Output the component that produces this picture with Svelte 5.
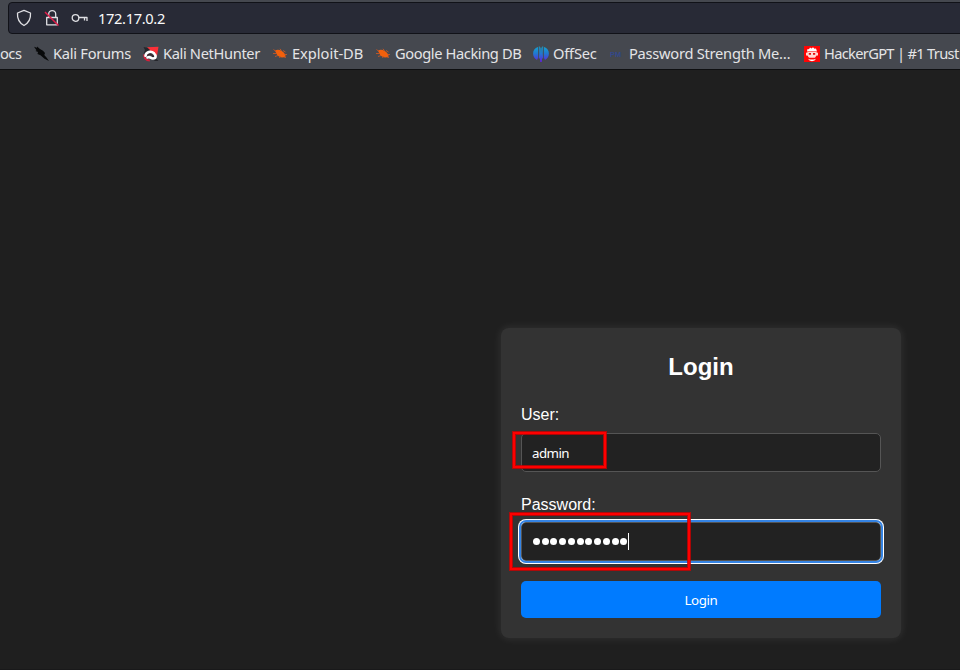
<script>
  const bookmarks = [
    { icon: 'forums', label: 'Kali Forums', width: 110, spacing: -0.27 },
    { icon: 'nethunter', label: 'Kali NetHunter', width: 129, spacing: -0.36 },
    { icon: 'bug', label: 'Exploit-DB', width: 103, spacing: -0.03 },
    { icon: 'bug', label: 'Google Hacking DB', width: 158, spacing: -0.4 },
    { icon: 'offsec', label: 'OffSec', width: 76, spacing: -0.2 },
    { icon: 'pm', label: 'Password Strength Me…', width: 195, spacing: -0.26 },
    { icon: 'gpt', label: 'HackerGPT | #1 Trust', width: 156, spacing: -0.68 }
  ];
  const dots = Array.from({ length: 11 });
</script>

<div class="browser">
  <header>
    <div class="address">
      <svg class="shield" width="16" height="18" viewBox="0 0 16 18"><path d="M8 1.400 14.500 4c.4 5.400-1.500 9.700-6.500 12.500C3 13.700 1.100 9.400 1.500 4Z" /></svg>
      <svg class="lock" width="16" height="18" viewBox="0 0 16 18"><path d="M4.700 8V5C4.700 .600 11.700 .600 11.700 5V8M2.700 8.500h10.600v7.300H2.700Z" /><path class="slash" d="M1 3 14.500 16.500" /></svg>
      <svg class="key" width="18" height="12" viewBox="0 0 18 12"><circle cx="4.500" cy="6" r="3.300" /><path d="M8 5.500h8v3.500M13.500 5.500v3" /></svg>
      <span>172.17.0.2</span>
    </div>
    <nav>
      <span class="docs">ocs</span>
      {#each bookmarks as item}
        <div class="bookmark" style:width={`${item.width}px`}>
          <svg width="16" height="16" viewBox="0 0 16 16">
            {#if item.icon === 'forums'}
              <path fill="#08090a" d="m1 .8 3 1L4 .600l3 2.400 3 1.800 2 2.200-.7 2 2.200 2.500 2.500 3.500-4.500-2.200-4-3.600L4.500 8 5 6 2.500 5l1-.8Z" />
            {:else if item.icon === 'nethunter'}
              <path fill="#fb3038" d="M4 1.200 15.500.800 14 10 11 6.500 7 4.500Z" />
              <path fill="#25262b" d="m.5 1 4 .8L7 4 3 6.500.500 8l1.500-4ZM10 9l5.500 6H12L8 12Z" />
              <path fill="none" stroke="#d61f3a" stroke-width="1.800" d="M1.300 8.500c-.5 3 1.500 6 5.500 6" />
              <path fill="none" stroke="#fff" stroke-width="2.600" stroke-linecap="round" d="M2.500 9.800C3 5.800 8 4.500 11 7.300c2 2 2.500 5-1 5.200C7.500 12.500 7 10 4.500 11.500" />
              <path fill="none" stroke="#3a252c" stroke-width="1.200" d="M4.500 9.600C6 7.500 8.500 8.300 10 10.500" />
            {:else if item.icon === 'bug'}
              <path fill="#f2600c" d="M3 4.800C4.500 3.400 7.500 3.500 9.700 5c2.200 1 3.600 3 4 5.500-2.700 1.500-6.400 1.200-8.500-1.500Z" />
              <path fill="none" stroke="#c65724" stroke-width=".9" d="M1.500 3.500 4 5.500M1 7.500h4M3 10.500l3-1M7.500 12l1-2M8 2.800l1.500 2M11 4.500l2.500 1.500M12.500 8.500H15M12 11l2 .5" />
            {:else if item.icon === 'offsec'}
              <defs><linearGradient id="offsec-gradient" x1="0" y1="0" x2="0" y2="16" gradientUnits="userSpaceOnUse"><stop offset="0" stop-color="#14a5cf" /><stop offset=".45" stop-color="#207bd1" /><stop offset="1" stop-color="#6020dc" /></linearGradient></defs>
              <path fill="url(#offsec-gradient)" d="M5 1C-1.200 2.500-1.500 11 4 14L5 12ZM11 1C17.200 2.500 17.500 11 12 14L11 12ZM5.800 .500h1v12h-1ZM9.200 .500h1v12h-1ZM7.400 1.500h1.200l.6 9-.4 5.500H7.200l-.4-5.500Z" />
            {:else if item.icon === 'pm'}
              <text x="1" y="11" font-family="Liberation Sans" font-size="7.500" font-weight="700" fill="#33498a">PM</text>
            {:else}
              <path fill="#fe0505" d="M0 0h16v16H0Z" />
              <path fill="#fff" d="M3 5.500 3.500 3l1.500.3L6 1.500l1.500 1L9 1.200l1.500 1.500 1.500-.2L13 5.500 11.500 5H4.500Z" />
              <path fill="#ffd8d2" d="M3.500 5.500h9v1l1.500.3v2.700h-1.500L11 11.800H5L3.500 9.500H2V6.800l1.500-.3Z" />
              <path fill="#e50b0b" d="M4.800 7H7v1.800H4.800ZM9 7h2.200v1.800H9Z" />
              <path fill="#fff" d="M4 12.800 6 13.500h4l2-.7-1.500 1.700L8 15.200l-2.500-.7Z" />
            {/if}
          </svg>
          <span style:letter-spacing={`${item.spacing}px`}>{item.label}</span>
        </div>
      {/each}
    </nav>
  </header>

  <main>
    <form onsubmit={(e) => e.preventDefault()}>
      <h2>Login</h2>
      <label for="user">User:</label>
      <div class="control user-control">
        <input id="user" value="admin" />
        <div class="mark user-mark"></div>
      </div>
      <label class="password-label" for="password">Password:</label>
      <div class="control">
        <div id="password" class="password" role="textbox" tabindex="0" aria-label="Password">
          {#each dots as _}<i></i>{/each}<b></b>
        </div>
        <div class="mark password-mark"></div>
      </div>
      <button>Login</button>
    </form>
  </main>
</div>

<style>
  :global(body) { margin: 0; overflow: hidden; background: #1f1f1f; }
  * { box-sizing: border-box; }
  .browser { width: 960px; height: 670px; overflow: hidden; background: #1f1f1f; border-bottom: 1px solid #19191a; }
  header { height: 70px; padding-top: 2px; background: #45484f; border-bottom: 1px solid #0e0f11; color: #e4e4e6; font: 14.670px/20px "Noto Sans", sans-serif; }
  .address { display: flex; align-items: center; width: 970px; height: 32px; margin-left: 8px; padding-left: 7px; background: #282a36; border: 1px solid #111218; border-radius: 4px; }
  .address svg { fill: none; stroke: #dfdfe3; stroke-width: 1.300; stroke-linejoin: round; flex: none; }
  .address .lock { margin-left: 12px; }
  .address .slash { stroke: #e31d4a; stroke-width: 1.500; }
  .address .key { margin-left: 11px; }
  .address span { margin-left: 9px; color: #f9f9fa; letter-spacing: -.35px; }
  nav { display: flex; align-items: center; height: 35px; padding-top: 5px; white-space: nowrap; }
  .docs { width: 33px; flex: none; letter-spacing: -.5px; margin-top: -2px; }
  .bookmark { display: flex; align-items: center; gap: 4px; flex: none; }
  .bookmark svg { flex: none; }
  .bookmark span { margin-top: -2px; }
  main { display: flex; justify-content: flex-end; padding: 258px 59px 0 0; }
  form { width: 400px; height: 310px; padding: 20px; border-radius: 8px; background: #333; box-shadow: 0 0 10px rgba(255, 255, 255, .1); color: #fff; font: 16px/18px "Liberation Sans", sans-serif; }
  h2 { margin: 5px 0 25px; font-size: 24px; line-height: 28px; text-align: center; }
  label { display: block; height: 18px; margin: 0 0 9px; }
  .password-label { margin-bottom: 8px; }
  .control { position: relative; height: 39px; margin-bottom: 20px; }
  .user-control { margin-bottom: 24px; }
  input, .password { display: flex; align-items: center; width: 100%; height: 39px; padding: 0 10px; border: 1px solid #555; border-radius: 5px; background: #222; color: #fff; font: 13.333px/18px "Noto Sans", sans-serif; letter-spacing: -.55px; }
  .password { padding: 0 11px; outline: 2px solid #3584e4; box-shadow: 0 0 0 3px #fff; }
  i { width: 7px; height: 7px; margin-right: 1.740px; border-radius: 50%; background: #fff; flex: none; }
  b { width: 1px; height: 17px; margin-left: -1px; background: #fff; }
  .mark { position: absolute; border: 2px solid #f00; box-shadow: 0 0 0 1px rgba(205, 0, 0, .8), inset 0 0 0 1px rgba(205, 0, 0, .8); pointer-events: none; }
  .user-mark { left: -8px; top: -1px; width: 93px; height: 36px; }
  .password-mark { left: -11px; top: -9px; width: 180px; height: 57px; }
  button { display: block; width: 100%; height: 37px; padding: 1px 0 0; border: 0; border-radius: 5px; background: #007bff; color: #fff; font: 13.333px/18px "Noto Sans", sans-serif; letter-spacing: -.4px; }
</style>
